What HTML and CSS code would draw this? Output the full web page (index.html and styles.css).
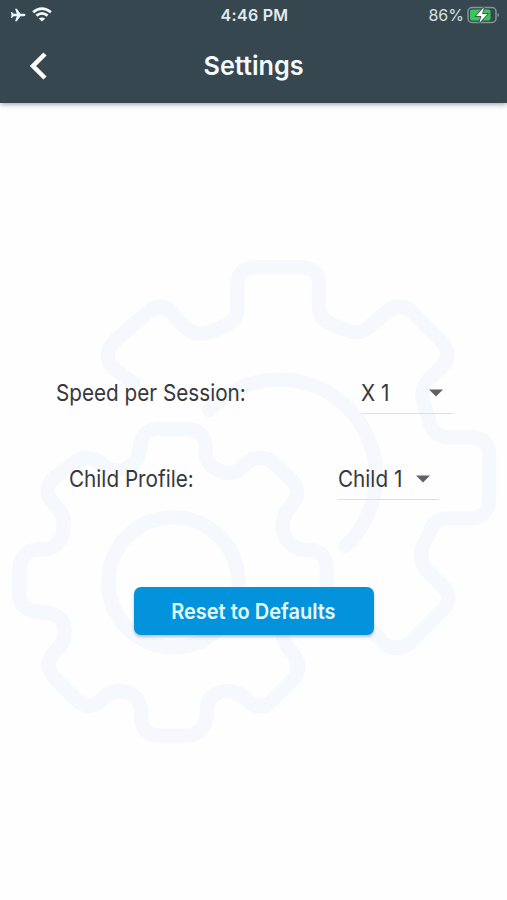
FILE: index.html
```html
<!DOCTYPE html>
<html lang="en">
<head>
<meta charset="utf-8">
<title>Settings</title>
<link rel="stylesheet" href="styles.css">
</head>
<body>
<header class="header">
  <div class="status">
    <div class="status-left">
      <svg class="plane" viewBox="0 0 16 14"><path d="M15.400 7c0-.8-.8-1.200-1.600-1.200H10.500L6.800.8H5.100L6.800 5.800H3.500L2 4H.8l.8 3L.8 10H2l1.500-1.800h3.300L5.100 13.200h1.700L10.500 8.200h3.300c.8 0 1.600-.4 1.600-1.200z"/></svg>
      <svg class="wifi" viewBox="0 0 20 15"><path class="wave" d="M1.100 5.300Q10-2.200 18.900 5.300M4.400 8.600Q10 4.200 15.600 8.600"/><path class="dot" d="M10 14.500L6.800 11.600Q10 9.200 13.200 11.600Z"/></svg>
    </div>
    <span class="time">4:46 PM</span>
    <div class="status-right">
      <span class="percent">86%</span>
      <svg class="battery" viewBox="0 0 32 18"><rect class="shell" x="1" y="1.500" width="28" height="15" rx="4"/><rect class="charge" x="3" y="3.500" width="20.500" height="11" rx="2"/><path class="cap" d="M30.500 7v4q1.500-.5 1.500-2t-1.500-2z"/><path class="bolt" d="M17 1.300L9 10h5.400L12.300 17 20.500 8h-5.400z"/></svg>
    </div>
  </div>
  <nav class="bar">
    <svg class="back" viewBox="0 0 18 28"><path d="M15 2L3 14L15 26"/></svg>
    <h1 class="title">Settings</h1>
  </nav>
</header>
<main class="content">
  <svg class="gears" viewBox="0 103 507 797">
    <g transform="translate(0 240) scale(.33333)">
      <path d="M400 428L340 385Q307 345 340 307L445 215Q480 187 515 215L550 258Q590 297 650 268L690 250Q712 235 712 205V130Q715 85 765 82H905Q955 85 957 130V195Q957 235 985 248L1050 275Q1085 285 1110 258L1165 212Q1200 188 1232 212L1325 305Q1360 345 1325 382L1285 420Q1258 450 1272 490L1290 550Q1305 590 1345 592H1420Q1465 595 1467 640V780Q1465 830 1420 835H1335Q1300 838 1290 875L1268 920Q1255 960 1280 990L1325 1035Q1362 1070 1330 1110L1232 1208Q1190 1238 1150 1208L1110 1165"/>
      <path d="M628 510A289 289 0 1 1 1037 918"/>
      <circle cx="520" cy="1027" r="195"/>
      <path d="M475 567H560Q615 570 617 620V640Q620 675 655 690Q690 710 725 685Q745 658 780 653Q800 653 820 667L870 715Q910 755 875 795Q848 820 848 860Q850 900 885 920Q905 932 930 930Q980 935 980 985V1065Q980 1115 930 1120Q850 1120 848 1185Q850 1210 870 1230Q912 1275 880 1320L815 1385Q780 1412 745 1385Q715 1352 680 1353Q622 1360 620 1410V1430Q610 1485 560 1487H475Q425 1485 423 1430V1410Q415 1355 355 1353Q325 1355 295 1388Q265 1407 235 1385L165 1315Q127 1275 165 1235Q200 1205 193 1160Q185 1120 130 1117Q60 1115 58 1065V990Q60 935 110 928H140Q190 915 190 860Q195 820 165 795Q127 760 155 720L230 662Q265 642 300 667Q330 697 365 690Q415 675 420 625V620Q425 570 475 567Z"/>
    </g>
  </svg>
  <section class="form">
    <div class="row">
      <label class="label"><span class="text speed">Speed per Session:</span></label>
      <div class="select wide"><span class="text x">X 1</span><svg class="arrow" viewBox="0 0 14 8"><path d="M0 .5H14L7 7.500Z"/></svg></div>
    </div>
    <div class="row profile-row">
      <label class="label"><span class="text profile">Child Profile:</span></label>
      <div class="select child-select"><span class="text child">Child 1</span><svg class="arrow" viewBox="0 0 14 8"><path d="M0 .5H14L7 7.500Z"/></svg></div>
    </div>
    <button class="reset"><span>Reset to Defaults</span></button>
  </section>
</main>
</body>
</html>
```
FILE: styles.css
```css
* { box-sizing: border-box; }
body { margin: 0; height: 900px; overflow: hidden; background: #fefefe; color: #38383a; font-family: Inter, "Liberation Sans", sans-serif; }
.header { position: relative; height: 103px; background: #37474f; color: #f4fbff; box-shadow: 0 1px 5px rgba(40, 40, 65, .5); }
.status { display: grid; grid-template-columns: 1fr auto 1fr; align-items: center; height: 29px; padding: 0 8px 0 10px; }
.status-left, .status-right { display: flex; align-items: center; }
.status-left { gap: 6px; }
.status-right { justify-content: flex-end; gap: 3px; }
.plane { width: 16px; height: 14px; fill: #eef8fc; }
.wifi { width: 20px; height: 15px; }
.wave { fill: none; stroke: #f4fbff; stroke-width: 2.7; }
.dot { fill: #f4fbff; }
.time { font-size: 16px; font-weight: 600; letter-spacing: .3px; color: #e0ecf1; }
.percent { font-size: 16px; letter-spacing: 0; color: #d8e1e5; }
.battery { width: 32px; height: 18px; }
.shell { fill: none; stroke: #87949a; stroke-width: 1.5; }
.charge { fill: #37c75a; }
.cap { fill: #87949a; }
.bolt { fill: #fff; stroke: #37474f; stroke-width: 1.5; paint-order: stroke; }
.bar { display: grid; grid-template-columns: 1fr auto 1fr; align-items: center; height: 74px; }
.back { width: 18px; height: 28px; margin-left: 30px; fill: none; stroke: #fff; stroke-width: 4.5; }
.title { margin: 0; font-size: 26px; line-height: 74px; font-weight: 600; transform: scaleX(.97); }
.content { display: grid; height: 797px; }
.gears, .form { grid-area: 1 / 1; }
.gears { width: 507px; height: 797px; fill: none; stroke: #f5f8fd; stroke-width: 43; stroke-linecap: round; stroke-linejoin: round; }
.form { display: flex; flex-direction: column; z-index: 1; padding-top: 269px; }
.row { display: flex; justify-content: space-between; height: 42px; padding: 0 54px 0 56px; }
.profile-row { margin-top: 44px; padding: 0 68px 0 69px; }
.label, .select { display: flex; align-items: center; }
.select { justify-content: space-between; border-bottom: 1.500px solid #dcdfe4; padding-right: 10px; }
.wide { width: 92px; }
.child-select { width: 101px; padding-right: 9px; }
.text { font-size: 23px; line-height: 42px; white-space: nowrap; transform-origin: left; transform: scaleX(.9); }
.child { width: 66px; }
.arrow { width: 14px; height: 8px; fill: #606164; }
.reset { align-self: center; width: 240px; height: 48px; margin: 87px 0 0 1px; padding: 0; border: 0; border-radius: 7px; background: #0293dc; color: #e4fbff; box-shadow: 0 2px 3px rgba(35, 55, 100, .3); font: 600 21.500px Inter, sans-serif; }
.reset span { display: inline-block; white-space: nowrap; transform: translate(-1px, 0) scaleX(.93); }
```
